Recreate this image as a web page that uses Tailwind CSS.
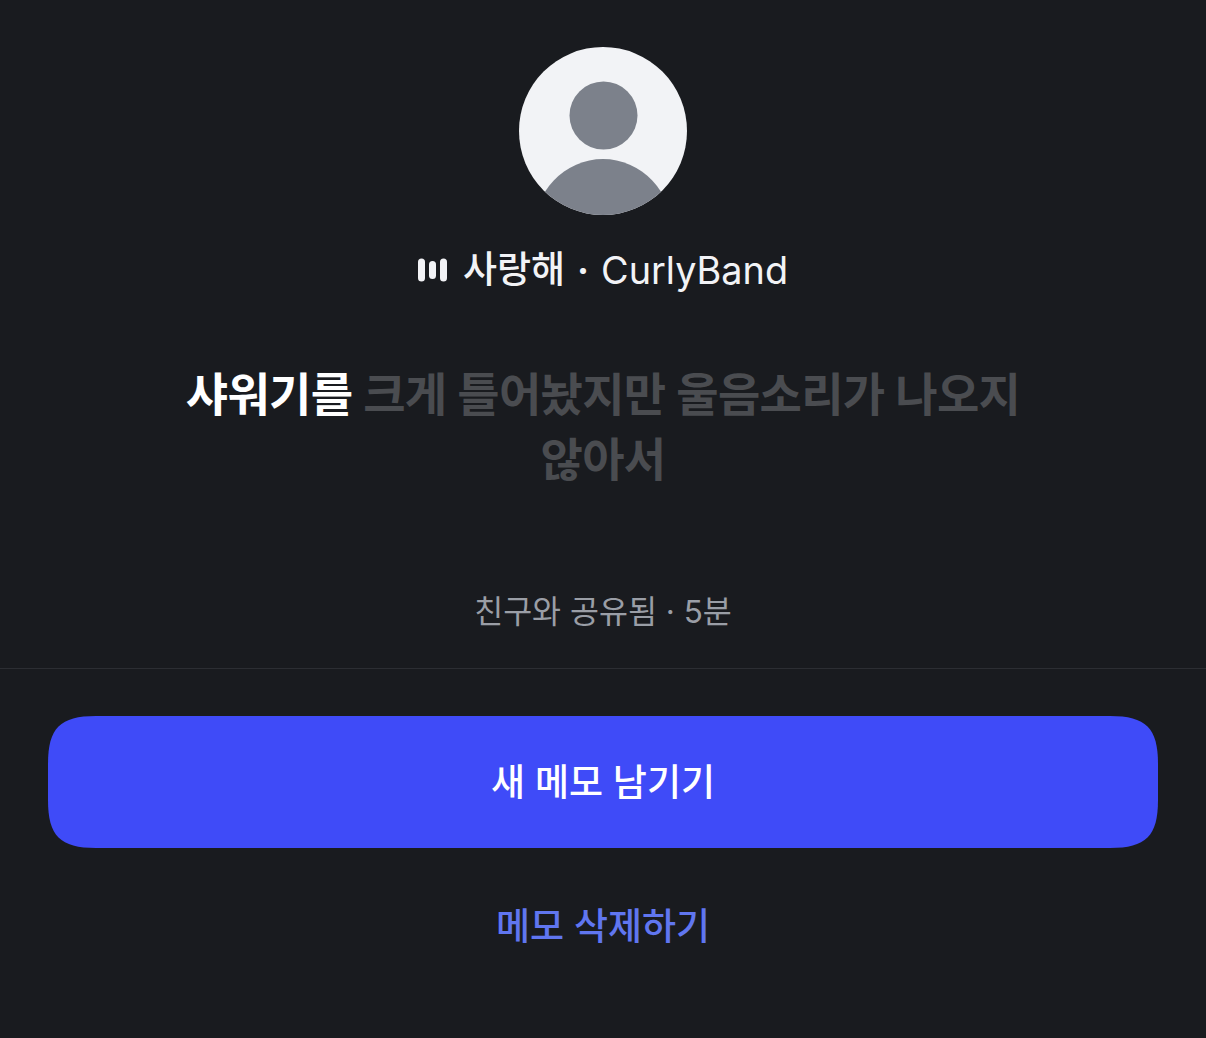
<!DOCTYPE html>
<html lang="ko">
<head>
  <meta charset="UTF-8"/>
  <title>메모</title>
  <script src="https://cdn.jsdelivr.net/npm/@tailwindcss/browser@4"></script>
</head>
<body class="bg-[#191b1f] font-['Inter','Noto_Sans_CJK_KR',sans-serif]">
  <div class="h-[1038px] w-[1206px] overflow-hidden flex flex-col items-center">
    <!-- avatar -->
    <svg class="mt-[47px] block shrink-0" width="168" height="168" viewBox="0 0 168 168">
      <defs><clipPath id="av"><circle cx="84" cy="84" r="84"/></clipPath></defs>
      <circle cx="84" cy="84" r="84" fill="#f2f3f6"/>
      <g clip-path="url(#av)" fill="#7c818b">
        <circle cx="84.5" cy="68.5" r="34"/>
        <ellipse cx="84" cy="186" rx="70" ry="74"/>
      </g>
    </svg>

    <!-- now playing -->
    <div class="mt-[33px] flex items-center h-[44px] leading-[44px] text-[#f2f3f6]">
      <svg class="mr-[16px] shrink-0" width="29" height="24" viewBox="0 0 29 24" fill="#f2f3f6">
        <rect x="0" y="0.5" width="7" height="23" rx="3.5"/>
        <rect x="11" y="3" width="7" height="18" rx="3.5"/>
        <rect x="22" y="0.5" width="7" height="23" rx="3.5"/>
      </svg>
      <span class="text-[37px] font-medium">사랑해</span>
      <span class="text-[36px] font-bold mx-[12px]">·</span>
      <span class="text-[37.8px]">CurlyBand</span>
    </div>

    <!-- lyrics -->
    <p class="mt-[70px] w-[860px] text-center text-[46px] leading-[65px] font-semibold text-[#4a4c50] tracking-[-0.7px] break-keep">
      <span class="text-white">샤워기를</span> 크게 틀어놨지만 울음소리가 나오지 않아서
    </p>

    <p class="mt-[100px] text-[31.5px] leading-[40px] text-[#9a9ea6]">친구와 공유됨 · 5분</p>

    <!-- actions -->
    <div class="mt-[36px] w-full border-t border-[#2c2e33] px-[48px] pt-[47px] flex flex-col items-center">
      <button class="w-full h-[132px] pt-[2px] bg-[#3f4bf8] text-white text-[37px] font-medium [clip-path:path('M48_0H1062C1098_0_1110_12_1110_48V84C1110_120_1098_132_1062_132H48C12_132_0_120_0_84V48C0_12_12_0_48_0Z')]">새 메모 남기기</button>
      <button class="mt-[55px] h-[48px] text-[37px] leading-[48px] font-medium text-[#6076f0]">메모 삭제하기</button>
    </div>
  </div>
</body>
</html>
